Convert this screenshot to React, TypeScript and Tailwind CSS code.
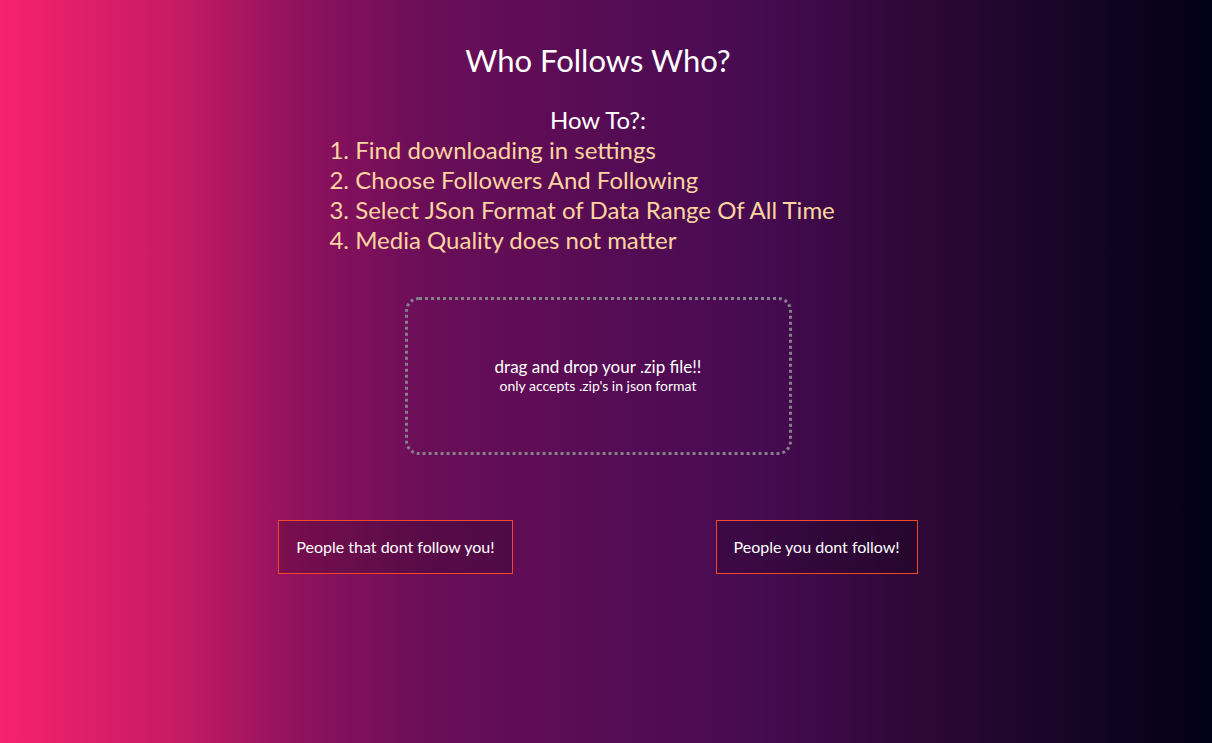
export default function App() {
  return (
    <div
      className="min-h-screen w-full flex flex-col items-center pr-[16px] bg-[linear-gradient(to_right,#f7216f_0%,#c41b63_15%,#8e115e_25%,#6b0e58_35%,#560c54_50%,#470b52_62%,#2f0838_75%,#170526_88%,#020018_100%)]"
      style={{ fontFamily: 'Lato, "Noto Sans", sans-serif' }}
    >
      <h1 className="mt-[40px] text-[31px] leading-[40px] text-white">Who Follows Who?</h1>
      <div className="mt-[25px] text-[24px] leading-[30px] text-white">How To?:</div>
      <ol className="list-decimal list-outside text-left text-[24px] leading-[30px] text-[#fcd5a0] pl-0 ml-[-6px]">
        <li className="pl-[0px]">Find downloading in settings</li>
        <li>Choose Followers And Following</li>
        <li>Select JSon Format of Data Range Of All Time</li>
        <li>Media Quality does not matter</li>
      </ol>
      <div className="mt-[42px] w-[387px] h-[158px] rounded-[14px] border-[3px] border-dotted border-[#85808c] flex flex-col items-center justify-center text-white">
        <div className="text-[17px] leading-[20px]">drag and drop your .zip file!!</div>
        <div className="text-[14px] leading-[18px]">only accepts .zip's in json format</div>
      </div>
      <div className="mt-[65px] flex gap-[203px]">
        <button className="h-[54px] px-[17px] border border-[#f5472a] bg-[rgba(0,0,0,0.18)] text-white text-[16px]">
          People that dont follow you!
        </button>
        <button className="h-[54px] px-[17px] border border-[#f5472a] bg-[rgba(0,0,0,0.18)] text-white text-[16px]">
          People you dont follow!
        </button>
      </div>
    </div>
  );
}
